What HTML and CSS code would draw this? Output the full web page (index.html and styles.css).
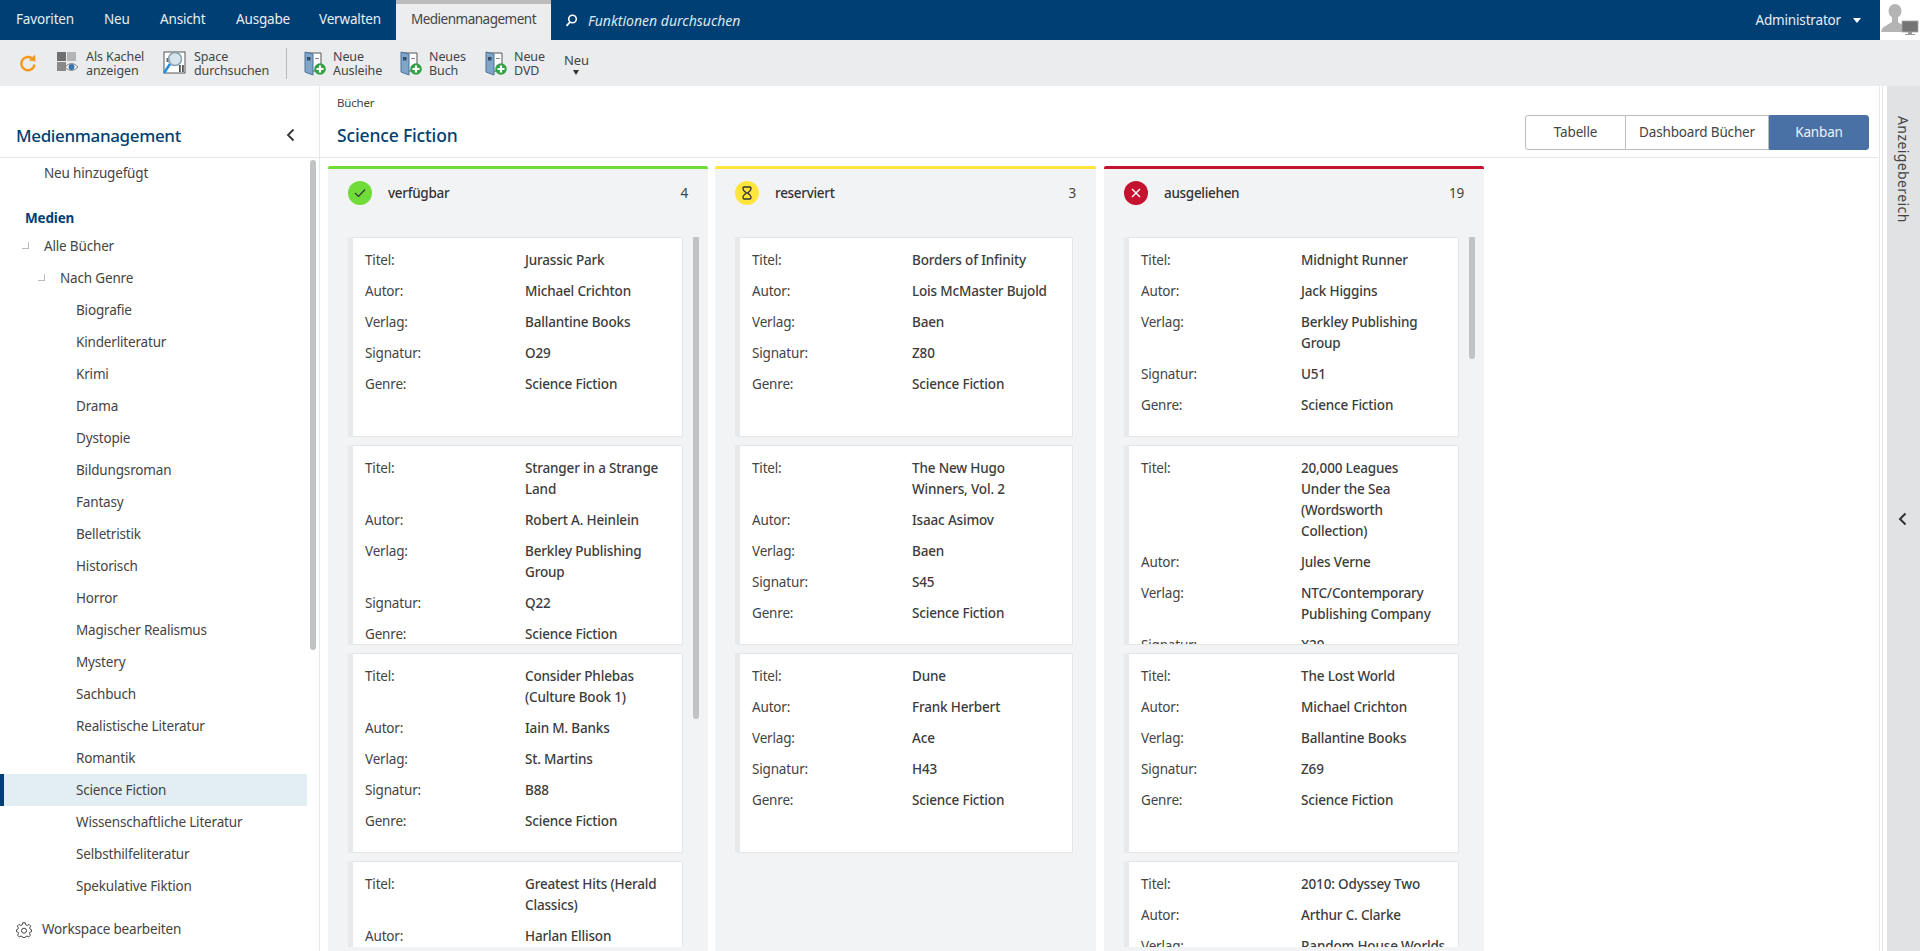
FILE: index.html
```html
<!DOCTYPE html>
<html lang="de">
<head>
<meta charset="utf-8">
<title>Medienmanagement</title>
<link rel="stylesheet" href="styles.css">
</head>
<body>
<header class="topbar">
  <nav class="menu">
    <a class="m1">Favoriten</a><a class="m2">Neu</a><a class="m3">Ansicht</a><a class="m4">Ausgabe</a><a class="m5">Verwalten</a>
    <a class="tab">Medienmanagement</a>
  </nav>
  <div class="search">
    <svg width="13" height="13" viewBox="0 0 13 13"><circle cx="7.5" cy="5" r="3.8" fill="none" stroke="#fff" stroke-width="1.6"/><path d="M5 8 L1.5 11.8" stroke="#fff" stroke-width="1.8"/></svg>
    <em>Funktionen durchsuchen</em>
  </div>
  <div class="user"><span>Administrator</span><i class="caret"></i></div>
  <div class="avatar">
    <svg width="40" height="40" viewBox="0 0 40 40"><ellipse cx="15" cy="11" rx="6.5" ry="7" fill="#b4b4b4"/><path d="M1 32 C2 26 8 25 12 22 L12 17 L18 17 L18 22 C20 23.500 21 24 22 24.500 L22 32Z" fill="#b4b4b4"/><rect x="22" y="21" width="16" height="11" fill="#757575" stroke="#a8a8a8" stroke-width=".8"/><rect x="28" y="32" width="4" height="2" fill="#999"/><rect x="25" y="34" width="10" height="1" fill="#999"/></svg>
  </div>
</header>
<div class="toolbar">
  <button class="tool t-refresh"><svg width="20" height="20" viewBox="0 0 20 20"><path d="M15.500 7 A6.600 6.600 0 1 0 16.500 11.500" fill="none" stroke="#f39a1e" stroke-width="2.400"/><path d="M11 7.500 L17.500 8.500 L17 1.500Z" fill="#f39a1e"/></svg></button>
  <button class="tool t-kachel"><svg width="22" height="22" viewBox="0 0 22 22"><rect x="0" y="0" width="9" height="9" fill="#6f6f6f"/><rect x="10" y="0" width="9" height="9" fill="#b5b5b5"/><rect x="0" y="10" width="9" height="9" fill="#8a8a8a"/><path d="M8 15 Q14.500 8 21 15 Q14.500 22 8 15Z" fill="#fff" stroke="#7a7a7a" stroke-width="1"/><circle cx="14.500" cy="15" r="3" fill="#3b73ad"/></svg><span>Als Kachel<br>anzeigen</span></button>
  <button class="tool t-space"><svg width="24" height="26" viewBox="0 0 24 26"><rect x="1" y="2" width="21" height="21" fill="#fff" stroke="#555"/><rect x="3.500" y="8" width="4" height="4" fill="#666"/><rect x="16" y="15" width="1.800" height="7" fill="#555"/><rect x="19" y="15" width="1.800" height="7" fill="#555"/><circle cx="12" cy="9" r="6.500" fill="#cfe0ea" fill-opacity=".85" stroke="#8aa0ae" stroke-width="1.500"/><path d="M7 14 L1 23" stroke="#1f8fe0" stroke-width="2.600"/></svg><span>Space<br>durchsuchen</span></button>
  <span class="sep"></span>
  <button class="tool t-a"><svg width="22" height="26" viewBox="0 0 22 26"><use href="#doc"/></svg><span>Neue<br>Ausleihe</span></button>
  <button class="tool t-b"><svg width="22" height="26" viewBox="0 0 22 26"><use href="#doc"/></svg><span>Neues<br>Buch</span></button>
  <button class="tool t-c"><svg width="22" height="26" viewBox="0 0 22 26"><use href="#doc"/></svg><span>Neue<br>DVD</span></button>
  <button class="tool t-neu"><span>Neu</span><i class="drop"></i></button>
</div>
<svg class="defs" width="0" height="0"><defs><g id="doc"><path d="M2 3 H17 V21 H2Z" fill="#fff" stroke="#555"/><path d="M1 2 L9 4 V25 L1 22Z" fill="#7fa6c9" stroke="#4d7396"/><rect x="3" y="7" width="3.500" height="3.500" fill="#334e66"/><rect x="11" y="8" width="4" height="1" fill="#888"/><circle cx="16" cy="19" r="5.800" fill="#35a045"/><path d="M16 15.500 V22.500 M12.500 19 H19.500" stroke="#fff" stroke-width="2.200"/></g></defs></svg>
<div class="work">
  <aside class="side">
    <div class="side-head"><h2>Medienmanagement</h2><svg width="9" height="14" viewBox="0 0 9 14"><path d="M7.500 1.500 L2 7 L7.500 12.500" fill="none" stroke="#333" stroke-width="1.800"/></svg></div>
    <div class="side-scroll">
      <ul class="tree">
        <li class="l1 first">Neu hinzugefügt</li>
        <li class="group">Medien</li>
        <li class="l1"><i class="twig"></i>Alle Bücher</li>
        <li class="l2"><i class="twig"></i>Nach Genre</li>
        <li class="l3">Biografie</li>
        <li class="l3">Kinderliteratur</li>
        <li class="l3">Krimi</li>
        <li class="l3">Drama</li>
        <li class="l3">Dystopie</li>
        <li class="l3">Bildungsroman</li>
        <li class="l3">Fantasy</li>
        <li class="l3">Belletristik</li>
        <li class="l3">Historisch</li>
        <li class="l3">Horror</li>
        <li class="l3">Magischer Realismus</li>
        <li class="l3">Mystery</li>
        <li class="l3">Sachbuch</li>
        <li class="l3">Realistische Literatur</li>
        <li class="l3">Romantik</li>
        <li class="l3 active">Science Fiction</li>
        <li class="l3">Wissenschaftliche Literatur</li>
        <li class="l3">Selbsthilfeliteratur</li>
        <li class="l3">Spekulative Fiktion</li>
      </ul>
      <span class="thumb side-thumb"></span>
    </div>
    <div class="side-foot"><svg width="16" height="16" viewBox="0 0 16 16"><path d="M6.800 .7 H9.200 L9.600 2.700 L11.300 3.500 L13 2.400 L14.700 4.100 L13.600 5.800 L14.300 7.400 L15.500 7.800 V9.600 L14.200 10 L13.500 11.700 L14.300 13.300 L12.600 15 L11 14 L9.400 14.700 L9.100 15.500 H6.900 L6.600 14.700 L5 14 L3.400 15 L1.700 13.300 L2.500 11.700 L1.800 10 L.5 9.600 V7.800 L1.700 7.400 L2.400 5.800 L1.300 4.100 L3 2.400 L4.700 3.500 L6.400 2.700Z" fill="none" stroke="#444" stroke-width="1"/><circle cx="8" cy="8.700" r="2.500" fill="none" stroke="#444"/></svg><span>Workspace bearbeiten</span></div>
  </aside>
  <main class="main">
    <div class="main-head">
      <div class="titles"><div class="crumb">Bücher</div><h1>Science Fiction</h1></div>
      <div class="views"><a class="v1">Tabelle</a><a class="v2">Dashboard Bücher</a><a class="v3">Kanban</a></div>
    </div>
    <div class="board">
      <section class="col green">
        <div class="col-head"><span class="dot"><svg width="12" height="10" viewBox="0 0 12 10"><path d="M1 5 L4.500 8.500 L11 1.500" fill="none" stroke="#333" stroke-width="1.200"/></svg></span><b>verfügbar</b><span class="count">4</span></div>
        <div class="list">
          <article class="card"><dl><dt>Titel:</dt><dd>Jurassic Park</dd><dt>Autor:</dt><dd>Michael Crichton</dd><dt>Verlag:</dt><dd>Ballantine Books</dd><dt>Signatur:</dt><dd>O29</dd><dt>Genre:</dt><dd>Science Fiction</dd></dl></article>
          <article class="card"><dl><dt>Titel:</dt><dd>Stranger in a Strange Land</dd><dt>Autor:</dt><dd>Robert A. Heinlein</dd><dt>Verlag:</dt><dd>Berkley Publishing Group</dd><dt>Signatur:</dt><dd>Q22</dd><dt>Genre:</dt><dd>Science Fiction</dd></dl></article>
          <article class="card"><dl><dt>Titel:</dt><dd>Consider Phlebas (Culture Book 1)</dd><dt>Autor:</dt><dd>Iain M. Banks</dd><dt>Verlag:</dt><dd>St. Martins</dd><dt>Signatur:</dt><dd>B88</dd><dt>Genre:</dt><dd>Science Fiction</dd></dl></article>
          <article class="card"><dl><dt>Titel:</dt><dd>Greatest Hits (Herald Classics)</dd><dt>Autor:</dt><dd>Harlan Ellison</dd></dl></article>
          <span class="thumb t1"></span>
        </div>
      </section>
      <section class="col yellow">
        <div class="col-head"><span class="dot"><svg width="10" height="14" viewBox="0 0 10 14"><path d="M2 1 H8 C8.800 1 9 1.500 9 2.500 C9 4.500 7 6 5.500 7 C7 8 9 9.500 9 11.500 C9 12.500 8.800 13 8 13 H2 C1.200 13 1 12.500 1 11.500 C1 9.500 3 8 4.500 7 C3 6 1 4.500 1 2.500 C1 1.500 1.200 1 2 1Z" fill="none" stroke="#333" stroke-width="1.300"/></svg></span><b>reserviert</b><span class="count">3</span></div>
        <div class="list">
          <article class="card"><dl><dt>Titel:</dt><dd>Borders of Infinity</dd><dt>Autor:</dt><dd>Lois McMaster Bujold</dd><dt>Verlag:</dt><dd>Baen</dd><dt>Signatur:</dt><dd>Z80</dd><dt>Genre:</dt><dd>Science Fiction</dd></dl></article>
          <article class="card"><dl><dt>Titel:</dt><dd>The New Hugo Winners, Vol. 2</dd><dt>Autor:</dt><dd>Isaac Asimov</dd><dt>Verlag:</dt><dd>Baen</dd><dt>Signatur:</dt><dd>S45</dd><dt>Genre:</dt><dd>Science Fiction</dd></dl></article>
          <article class="card"><dl><dt>Titel:</dt><dd>Dune</dd><dt>Autor:</dt><dd>Frank Herbert</dd><dt>Verlag:</dt><dd>Ace</dd><dt>Signatur:</dt><dd>H43</dd><dt>Genre:</dt><dd>Science Fiction</dd></dl></article>
        </div>
      </section>
      <section class="col red">
        <div class="col-head"><span class="dot"><svg width="10" height="10" viewBox="0 0 10 10"><path d="M1 1 L9 9 M9 1 L1 9" stroke="#fff" stroke-width="1.400"/></svg></span><b>ausgeliehen</b><span class="count">19</span></div>
        <div class="list">
          <article class="card"><dl><dt>Titel:</dt><dd>Midnight Runner</dd><dt>Autor:</dt><dd>Jack Higgins</dd><dt>Verlag:</dt><dd>Berkley Publishing Group</dd><dt>Signatur:</dt><dd>U51</dd><dt>Genre:</dt><dd>Science Fiction</dd></dl></article>
          <article class="card"><dl><dt>Titel:</dt><dd>20,000 Leagues Under the Sea (Wordsworth Collection)</dd><dt>Autor:</dt><dd>Jules Verne</dd><dt>Verlag:</dt><dd>NTC/Contemporary Publishing Company</dd><dt>Signatur:</dt><dd>X29</dd></dl></article>
          <article class="card"><dl><dt>Titel:</dt><dd>The Lost World</dd><dt>Autor:</dt><dd>Michael Crichton</dd><dt>Verlag:</dt><dd>Ballantine Books</dd><dt>Signatur:</dt><dd>Z69</dd><dt>Genre:</dt><dd>Science Fiction</dd></dl></article>
          <article class="card"><dl><dt>Titel:</dt><dd>2010: Odyssey Two</dd><dt>Autor:</dt><dd>Arthur C. Clarke</dd><dt>Verlag:</dt><dd class="one-line">Random House Worlds</dd></dl></article>
          <span class="thumb t3"></span>
        </div>
      </section>
    </div>
  </main>
  <div class="gutter"></div>
  <aside class="rail"><span class="rail-label">Anzeigebereich</span><svg class="rail-chev" width="9" height="14" viewBox="0 0 9 14"><path d="M7.500 1.500 L2 7 L7.500 12.500" fill="none" stroke="#333" stroke-width="2"/></svg></aside>
</div>
</body>
</html>
```
FILE: styles.css
```css
* { box-sizing: border-box; }
html, body { margin: 0; height: 951px; overflow: hidden; background: #fff; }
body { font: 13.5px/21px "Noto Sans", sans-serif; letter-spacing: -.17px; color: #444; }
h1, h2, ul, dl, dd { margin: 0; padding: 0; }
.defs { position: absolute; }

.topbar { height: 40px; background: #003f73; display: flex; color: #e9eef3; }
.menu { display: flex; height: 40px; line-height: 38px; }
.menu a { display: block; }
.m1 { padding: 0 16px; width: 88px; }
.m2 { width: 56px; padding-left: 16px; }
.m3 { width: 76px; padding-left: 16px; }
.m4 { width: 83px; padding-left: 16px; }
.m5 { width: 93px; padding-left: 16px; }
.menu .tab { width: 155px; background: #ebedef; border-top: 4px solid #bbb; color: #444; text-align: center; line-height: 30px; height: 40px; letter-spacing: -.5px; }
.search { display: flex; align-items: center; gap: 10px; margin-left: 14px; }
.search em { font-size: 14px; letter-spacing: 0; color: #dfe6ed; }
.user { margin-left: auto; display: flex; align-items: center; gap: 12px; padding-right: 19px; }
.caret { width: 0; height: 0; border: 4px solid transparent; border-top: 5px solid #fff; border-bottom: 0; }
.avatar { width: 40px; height: 40px; background: #fff; }

.toolbar { height: 46px; background: #ebecee; display: flex; align-items: center; }
.tool { display: flex; align-items: center; border: 0; background: none; padding: 0; font: 12.5px/14px "Noto Sans", sans-serif; letter-spacing: -.1px; color: #444; text-align: left; gap: 7px; }
.tool span { display: block; padding-top: 2px; }
.t-refresh { margin-left: 18px; width: 20px; }
.t-kachel { margin-left: 19px; width: 106px; }
.t-space { width: 123px; }
.sep { width: 1px; height: 31px; background: #b8b8b8; }
.t-a { margin-left: 17px; width: 96px; }
.t-b { width: 85px; }
.t-c { width: 79px; }
.t-neu { flex-direction: column; gap: 3px; font-size: 13px; }
.drop { width: 0; height: 0; border: 3.5px solid transparent; border-top: 5px solid #333; border-bottom: 0; }

.work { display: flex; height: 865px; }
.side { width: 320px; border-right: 1px solid #e6e7e8; display: flex; flex-direction: column; }
.side-head { height: 72px; border-bottom: 1px solid #e6e7e8; display: flex; align-items: flex-end; justify-content: space-between; padding: 0 24px 5px 16px; }
.side-head h2 { font-size: 17px; line-height: 32px; font-weight: 500; color: #003f73; height: 32px; letter-spacing: -.35px; }
.side-head svg { margin-bottom: 10px; }
.side-scroll { position: relative; flex: 1; overflow: hidden; }
.tree { list-style: none; }
.tree li { height: 32px; line-height: 32px; color: #444; position: relative; width: 307px; }
.tree .first { height: 31px; line-height: 30px; }
.tree .group { margin-top: 13px; height: 28px; padding-left: 25px; font-weight: 700; color: #003f73; }
.l1 { padding-left: 44px; }
.l2 { padding-left: 60px; }
.l3 { padding-left: 76px; }
.twig { position: absolute; width: 7px; height: 7px; border-right: 1px solid #bbb; border-bottom: 1px solid #bbb; top: 12px; }
.l1 .twig { left: 22px; }
.l2 .twig { left: 38px; }
.tree .active { background: #e3edf4; border-left: 4px solid #003f73; padding-left: 72px; }
.thumb { position: absolute; width: 6px; border-radius: 3px; background: #c1c2c4; }
.side-thumb { left: 310px; top: 2px; height: 490px; }
.side-foot { height: 45px; display: flex; align-items: center; gap: 10px; padding: 2px 0 0 16px; }

.main { flex: 1; min-width: 0; }
.main-head { height: 72px; border-bottom: 1px solid #e6e7e8; display: flex; justify-content: space-between; padding: 0 9px 0 17px; }
.crumb { font-size: 11.5px; line-height: 18px; padding-top: 8px; height: 26px; }
.main-head h1 { font-size: 17.5px; line-height: 32px; font-weight: 500; color: #003f73; margin-top: 7px; letter-spacing: -.15px; }
.views { display: flex; margin-top: 29px; height: 35px; line-height: 32px; text-align: center; }
.views a { display: block; border: 1px solid #bbb; color: #444; }
.v1 { width: 101px; border-radius: 3px 0 0 3px; }
.v2 { width: 143px; border-left: 0 !important; }
.views .v3 { width: 100px; background: #4a71a5; border-color: #4a71a5; border-radius: 0 3px 3px 0; color: #eef2f7; }
.board { display: grid; grid-template-columns: 387px 389px 380px; padding: 8px 0 0 8px; }
.col { height: 785px; background: #f2f3f5; border-top: 3px solid; border-radius: 2px 2px 0 0; padding: 0 0 4px 20px; display: flex; flex-direction: column; }
.green { width: 380px; border-top-color: #6fdc3a; }
.yellow { width: 381px; border-top-color: #ffe53c; }
.red { width: 380px; border-top-color: #c4122f; }
.col-head { height: 68px; display: flex; align-items: center; padding: 0 20px 20px 0; }
.col-head b { font-weight: 500; margin-left: 16px; flex: 1; color: #333; letter-spacing: -.3px; }
.dot { width: 24px; height: 24px; border-radius: 50%; display: flex; align-items: center; justify-content: center; }
.green .dot { background: #6fdc3a; }
.yellow .dot { background: #ffe53c; }
.red .dot { background: #c4122f; }
.list { position: relative; flex: 1; overflow: hidden; padding-right: 25px; display: flex; flex-direction: column; gap: 8px; }
.yellow .list { padding-right: 23px; }
.card { flex: none; height: 200px; background: #fff; border: 1px solid #e4e5e7; border-left: 5px solid #e8e9eb; border-radius: 2px; overflow: hidden; padding: 12px 10px 0 12px; }
.card dl { display: grid; grid-template-columns: 160px 136px; row-gap: 10px; }
.card dd { font-weight: 500; color: #3c3c3c; }
.card .one-line { white-space: nowrap; }
.t1 { right: 9px; top: -1px; height: 483px; }
.t3 { right: 9px; top: -1px; height: 123px; }

.gutter { width: 4px; border-left: 1px solid #e6e7e8; border-right: 1px solid #e6e7e8; margin-left: 1px; }
.rail { width: 33px; background: #e1e2e4; position: relative; margin-left: 4px; }
.rail-label { position: absolute; left: 8px; top: 30px; writing-mode: vertical-rl; line-height: 17px; font-size: 14px; letter-spacing: .4px; }
.rail-chev { position: absolute; left: 11px; top: 426px; }
```
